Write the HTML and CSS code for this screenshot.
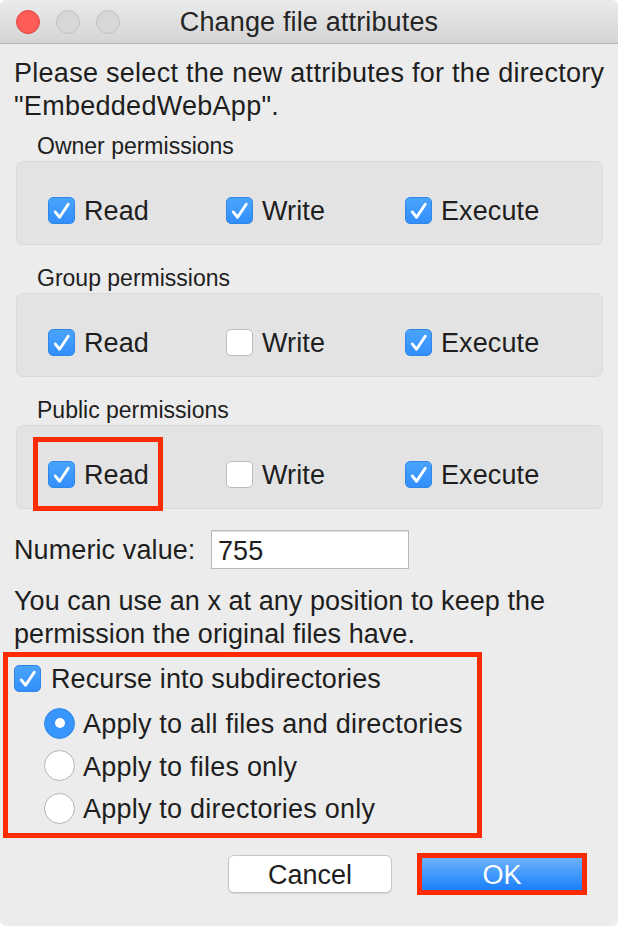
FILE: index.html
```html
<!DOCTYPE html>
<html>
<head>
<meta charset="utf-8">
<link rel="stylesheet" href="styles.css">
</head>
<body>
<div class="window">
  <div class="titlebar">
    <div class="lights">
      <span class="light close"></span>
      <span class="light"></span>
      <span class="light"></span>
    </div>
    <div class="title">Change file attributes</div>
  </div>
  <div class="content">
    <p class="intro">Please select the new attributes for the directory<br>"EmbeddedWebApp".</p>

    <div class="group">
      <div class="group-label">Owner permissions</div>
      <div class="box">
        <div class="opt"><span class="cb on"><svg viewBox="0 0 28 28"><path d="M7.5 15.5 L12 21 L21 7.5"/></svg></span><span class="lbl">Read</span></div>
        <div class="opt"><span class="cb on"><svg viewBox="0 0 28 28"><path d="M7.5 15.5 L12 21 L21 7.5"/></svg></span><span class="lbl">Write</span></div>
        <div class="opt"><span class="cb on"><svg viewBox="0 0 28 28"><path d="M7.5 15.5 L12 21 L21 7.5"/></svg></span><span class="lbl">Execute</span></div>
      </div>
    </div>

    <div class="group">
      <div class="group-label">Group permissions</div>
      <div class="box">
        <div class="opt"><span class="cb on"><svg viewBox="0 0 28 28"><path d="M7.5 15.5 L12 21 L21 7.5"/></svg></span><span class="lbl">Read</span></div>
        <div class="opt"><span class="cb"></span><span class="lbl">Write</span></div>
        <div class="opt"><span class="cb on"><svg viewBox="0 0 28 28"><path d="M7.5 15.5 L12 21 L21 7.5"/></svg></span><span class="lbl">Execute</span></div>
      </div>
    </div>

    <div class="group">
      <div class="group-label">Public permissions</div>
      <div class="box">
        <div class="opt"><span class="cb on"><svg viewBox="0 0 28 28"><path d="M7.5 15.5 L12 21 L21 7.5"/></svg></span><span class="lbl">Read</span></div>
        <div class="opt"><span class="cb"></span><span class="lbl">Write</span></div>
        <div class="opt"><span class="cb on"><svg viewBox="0 0 28 28"><path d="M7.5 15.5 L12 21 L21 7.5"/></svg></span><span class="lbl">Execute</span></div>
        <div class="mark-read"></div>
      </div>
    </div>

    <div class="numeric">
      <span class="num-label">Numeric value:</span>
      <div class="num-input">755</div>
    </div>

    <p class="hint">You can use an x at any position to keep the<br>permission the original files have.</p>

    <div class="recurse">
      <div class="opt rec"><span class="cb on"><svg viewBox="0 0 28 28"><path d="M7.5 15.5 L12 21 L21 7.5"/></svg></span><span class="lbl">Recurse into subdirectories</span></div>
      <div class="radios">
        <div class="ropt"><span class="rb on"></span><span class="lbl">Apply to all files and directories</span></div>
        <div class="ropt"><span class="rb"></span><span class="lbl">Apply to files only</span></div>
        <div class="ropt"><span class="rb"></span><span class="lbl">Apply to directories only</span></div>
      </div>
    </div>

    <div class="buttons">
      <div class="btn cancel">Cancel</div>
      <div class="btn ok">OK</div>
    </div>
  </div>
</div>
</body>
</html>
```
FILE: styles.css
```css
html, body {
  margin: 0;
  padding: 0;
  background: #ffffff;
}
body {
  font-family: "Liberation Sans", Arial, sans-serif;
  color: #1e1e1e;
}
.window {
  width: 618px;
  height: 926px;
  background: #ececec;
  border-radius: 6px;
  overflow: hidden;
  box-sizing: border-box;
}
.titlebar {
  height: 43px;
  border-bottom: 1px solid #b3b3b3;
  background: linear-gradient(#ebebeb, #d4d4d4);
  display: flex;
  align-items: center;
  position: relative;
}
.lights {
  display: flex;
  gap: 16px;
  padding-left: 16px;
}
.light {
  width: 22px;
  height: 22px;
  border-radius: 50%;
  background: #d7d7d7;
  border: 1px solid #c2c2c2;
}
.light.close {
  background: #fd5b57;
  border-color: #e0443e;
}
.title {
  position: absolute;
  left: 0;
  right: 0;
  text-align: center;
  font-size: 27px;
  letter-spacing: 0.15px;
  color: #252525;
  line-height: 44px;
}
.content {
  padding: 13px 14px 0 14px;
}
.intro {
  margin: 0 -14px 0 0;
  white-space: nowrap;
  font-size: 27px;
  letter-spacing: 0.28px;
  line-height: 33px;
}
.group {
  margin-top: 10px;
}
.group + .group {
  margin-top: 20px;
}
.group-label {
  font-size: 23px;
  line-height: 26px;
  padding-left: 23px;
  margin-bottom: 2px;
}
.box {
  position: relative;
  margin-left: 2px;
  width: 587px;
  height: 84px;
  box-sizing: border-box;
  border: 1px solid #d9d9d9;
  border-radius: 7px;
  background: #e3e3e3;
  padding: 34px 0 0 31px;
  display: grid;
  grid-template-columns: 178px 179px auto;
  align-items: start;
}
.opt {
  display: flex;
  align-items: center;
  gap: 9px;
  font-size: 27px;
  letter-spacing: 0.1px;
  height: 28px;
  white-space: nowrap;
}
.lbl {
  padding-top: 3px;
}
.cb {
  width: 27px;
  height: 27px;
  box-sizing: border-box;
  border-radius: 5px;
  background: #fff;
  border: 1px solid #bcbcbc;
  display: flex;
  flex: none;
}
.cb.on {
  background: linear-gradient(#4aa4fd, #328ffb);
  border-color: #2f86e6;
}
.cb svg {
  width: 27px;
  height: 27px;
  margin: -1px;
}
.cb path {
  fill: none;
  stroke: #fff;
  stroke-width: 3;
  stroke-linecap: round;
  stroke-linejoin: round;
}
.mark-read {
  position: absolute;
  left: 16px;
  top: 11px;
  width: 130px;
  height: 74px;
  box-sizing: border-box;
  border: 5px solid #ff2a00;
}
.numeric {
  display: flex;
  align-items: center;
  margin-top: 21px;
  font-size: 27px;
  letter-spacing: 0.1px;
}
.num-label {
  width: 197px;
  padding-top: 2px;
}
.num-input {
  width: 198px;
  height: 39px;
  box-sizing: border-box;
  background: #fff;
  border: 1px solid #b9b9b9;
  box-shadow: inset 0 1px 0 #e0e0e0;
  padding-left: 6px;
  line-height: 40px;
}
.hint {
  margin: 16px 0 0 0;
  white-space: nowrap;
  font-size: 27px;
  letter-spacing: 0.05px;
  line-height: 33px;
}
.recurse {
  margin: 1px 0 0 -11px;
  width: 479px;
  box-sizing: border-box;
  border: 5px solid #ff2a00;
  padding: 7px 0 3px 6px;
}
.opt.rec {
  gap: 10px;
}
.radios {
  margin-top: 10px;
  padding-left: 30px;
}
.ropt {
  display: flex;
  align-items: center;
  gap: 8px;
  height: 42.5px;
  font-size: 27px;
  letter-spacing: 0.22px;
  white-space: nowrap;
}
.rb {
  width: 31px;
  height: 31px;
  box-sizing: border-box;
  border-radius: 50%;
  background: #fff;
  border: 1px solid #b5b5b5;
  flex: none;
  display: flex;
  align-items: center;
  justify-content: center;
}
.rb.on {
  background: #3895fb;
  border-color: #3089ee;
}
.rb.on::after {
  content: "";
  width: 10px;
  height: 10px;
  border-radius: 50%;
  background: #fff;
}
.buttons {
  display: flex;
  justify-content: flex-end;
  align-items: center;
  gap: 25px;
  margin-top: 15px;
  margin-right: 17px;
}
.btn {
  font-size: 27px;
  text-align: center;
  box-sizing: border-box;
}
.cancel {
  width: 164px;
  height: 38px;
  line-height: 38px;
  background: #fff;
  border: 1px solid #c5c5c5;
  border-radius: 6px;
  box-shadow: 0 1px 1px rgba(0,0,0,0.12);
}
.ok {
  width: 170px;
  height: 42px;
  line-height: 34px;
  color: #fff;
  border: 5px solid #ff2a00;
  background: linear-gradient(#6cb2fb, #1a80fb);
}
```
